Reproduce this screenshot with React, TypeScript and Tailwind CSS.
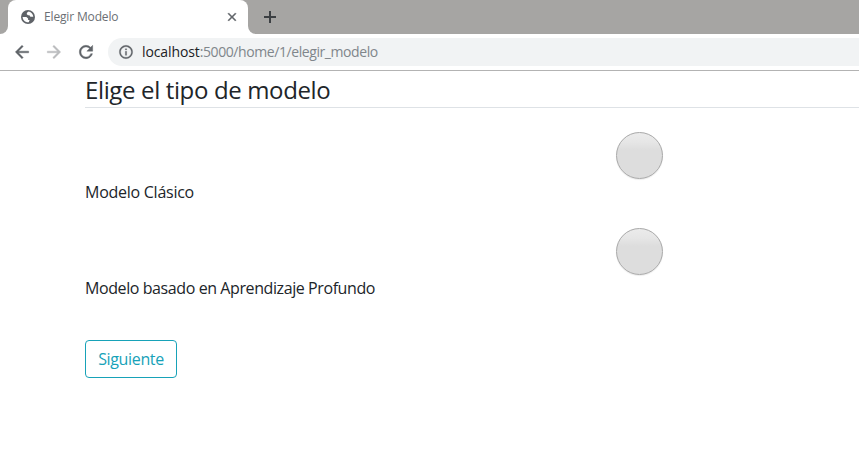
function Icon({ d, className, weight = 0.5 }: { d: string; className: string; weight?: number }) {
  return (
    <svg viewBox="0 0 24 24" className={className} fill="currentColor" stroke="currentColor" strokeWidth={weight}>
      <path d={d} />
    </svg>
  );
}

const BACK = "M20 11H7.83l5.59-5.59L12 4l-8 8 8 8 1.41-1.41L7.83 13H20v-2z";
const FORWARD = "M12 4l-1.41 1.41L16.17 11H4v2h12.17l-5.58 5.59L12 20l8-8z";
const REFRESH =
  "M17.65 6.35A7.958 7.958 0 0 0 12 4c-4.42 0-7.99 3.58-7.99 8s3.57 8 7.99 8c3.73 0 6.84-2.55 7.73-6h-2.08A5.99 5.99 0 0 1 12 18c-3.31 0-6-2.69-6-6s2.69-6 6-6c1.66 0 3.14.69 4.22 1.78L13 11h7V4l-2.35 2.35z";
const CLOSE = "M19 6.41 17.59 5 12 10.59 6.41 5 5 6.41 10.59 12 5 17.59 6.41 19 12 13.41 17.59 19 19 17.59 13.41 12z";
const INFO =
  "M11 7h2v2h-2zm0 4h2v6h-2zm1-9C6.48 2 2 6.48 2 12s4.48 10 10 10 10-4.48 10-10S17.52 2 12 2zm0 18c-4.41 0-8-3.59-8-8s3.59-8 8-8 8 3.59 8 8-3.59 8-8 8z";

function Globe() {
  return (
    <svg viewBox="0 0 16 16" className="size-4">
      <circle cx="8" cy="8" r="7" fill="#5f6368" />
      <path
        d="M8.8 2.6 7.4 3.2 6.6 4.9 8 6.2h1.4l1 1.6h2.9C13.1 5.3 11.4 3.2 8.8 2.6ZM2.6 8.1h3.8l1.7 1.4v1.4h1.5l-.8 2.4C5.6 13.7 2.8 11.5 2.6 8.1Z"
        fill="#fff"
      />
    </svg>
  );
}

function TabStrip() {
  return (
    <div className="flex h-[34px] bg-white">
      <div className="w-2 rounded-br-lg bg-[#a6a5a3]" />
      <div className="w-60 bg-[linear-gradient(#a6a5a3_50%,#fff_50%)]">
        <div className="flex h-full items-center rounded-t-lg bg-white pr-2 pl-3">
          <Globe />
          <span className="ml-2 flex-1 text-[12px] leading-4 tracking-[-0.15px] text-[#6b6f74]">Elegir Modelo</span>
          <Icon d={CLOSE} weight={0.8} className="mr-px size-3.5 text-[#5f6368]" />
        </div>
      </div>
      <div className="flex flex-1 items-center rounded-bl-lg bg-[#a6a5a3] pl-4">
        <svg viewBox="0 0 12 12" className="size-3 text-[#3c4043]" stroke="currentColor" strokeWidth="2">
          <path d="M6 0v12M0 6h12" />
        </svg>
      </div>
    </div>
  );
}

function Toolbar() {
  return (
    <div className="flex h-[37px] items-center border-b border-[#b3b3b3] bg-white pl-3">
      <Icon d={BACK} className="size-5 text-[#5f6368]" />
      <Icon d={FORWARD} className="ml-3 size-5 text-[#babcbe]" />
      <Icon d={REFRESH} className="ml-3 size-5 text-[#5f6368]" />
      <div className="ml-3 flex h-7 flex-1 items-center rounded-l-full bg-[#f1f3f4] pl-2.5">
        <Icon d={INFO} weight={0.4} className="size-4 text-[#5f6368]" />
        <span className="ml-2 text-[14px] leading-5 tracking-[-0.42px] text-[#80868b]">
          <span className="tracking-[-0.1px] text-[#202124]">localhost</span>:5000/home/1/elegir_modelo
        </span>
      </div>
    </div>
  );
}

function Option({ label, textClass }: { label: string; textClass: string }) {
  return (
    <label className="block h-24">
      <span className="mb-px ml-[531px] block size-[47px] rounded-full border border-[#a8a8a8] bg-[linear-gradient(#ebebeb,#e6e6e6_20%,#dddddd_38%,#dddddd)] shadow-[0_1px_1px_rgba(0,0,0,0.08)]" />
      <input type="radio" name="modelo" className="sr-only" />
      <span className={`block text-[16px] leading-6 ${textClass}`}>{label}</span>
    </label>
  );
}

export default function App() {
  return (
    <div className="h-[466px] overflow-hidden bg-white font-['Open_Sans','Noto_Sans',sans-serif] text-[#212529]">
      <TabStrip />
      <Toolbar />
      <main className="pl-[85px]">
        <h1 className="h-[37px] border-b border-[#dee2e6] pt-1 text-[24px] leading-[30px] tracking-[-0.36px]">
          Elige el tipo de modelo
        </h1>
        <form className="pt-6">
          <Option label="Modelo Clásico" textClass="tracking-[-0.26px]" />
          <Option label="Modelo basado en Aprendizaje Profundo" textClass="tracking-[-0.41px]" />
          <button
            type="button"
            className="mt-4 h-[38px] w-[92px] rounded border border-[#17a2b8] text-[16px] leading-6 tracking-[-0.35px] text-[#17a2b8]"
          >
            Siguiente
          </button>
        </form>
      </main>
    </div>
  );
}
